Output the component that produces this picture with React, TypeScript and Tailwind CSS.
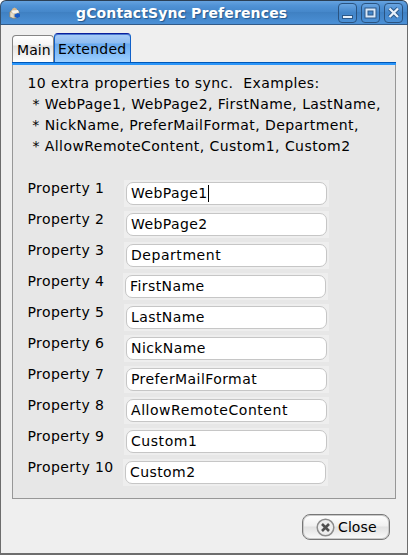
import React from 'react';

type Row = { label: string; value: string; shift?: boolean; focused?: boolean; wide?: boolean };

const rows: Row[] = [
  { label: 'Property 1', value: 'WebPage1', focused: true },
  { label: 'Property 2', value: 'WebPage2' },
  { label: 'Property 3', value: 'Department', wide: true },
  { label: 'Property 4', value: 'FirstName', shift: true },
  { label: 'Property 5', value: 'LastName' },
  { label: 'Property 6', value: 'NickName' },
  { label: 'Property 7', value: 'PreferMailFormat' },
  { label: 'Property 8', value: 'AllowRemoteContent', wide: true },
  { label: 'Property 9', value: 'Custom1', wide: true },
  { label: 'Property 10', value: 'Custom2', shift: true },
];

function AppIcon() {
  return (
    <svg width="12" height="12" viewBox="0 0 12 12" className="ml-[8px] shrink-0">
      <path d="M.8 5 3 3l7 1v6l-5 1.5L.8 10z" fill="#cdbfa5" stroke="#8c8068" strokeWidth=".7" />
      <path d="M3 2 5.5.6 8 2v1.5L3.5 4z" fill="#d9b98c" />
      <path d="M2.2 3.5 9 3l1 2.5-6 1z" fill="#f4f2ee" />
      <path d="M1.5 5.5 4.5 7v4L1.5 9.8z" fill="#e6dcc8" />
      <path d="M5.5 7.5 9 6l2 1.2v2.3L8.5 11l-2.8-1z" fill="#1459c8" />
    </svg>
  );
}

function TitleButton({ children }: { children: React.ReactNode }) {
  return (
    <div className="h-5 w-[19px] rounded-[4px] border border-[#2a5380] bg-linear-to-b from-[#69a5e2] via-[#4285c9] to-[#4b90d6]">
      <svg width="17" height="18" viewBox="0 0 17 18" fill="none">{children}</svg>
    </div>
  );
}

function TitleBar() {
  return (
    <div className="flex h-[25px] items-center rounded-t-[6px] border border-b-[#315a87] border-x-[#32506f] border-t-[#2b3f55] bg-[linear-gradient(#65a2df_0px,#4f91d5_5px,#4587ca_11px,#3f80c2_11px,#4b90d6_23px)]">
      <AppIcon />
      <div className="flex-1 pl-[55px] text-[14px] font-bold leading-[24px] text-white [text-shadow:1px_1px_1px_#24568c]">
        <span className="tracking-[0.13px]">gContactSync Preferences</span>
      </div>
      <div className="mr-[4px] flex gap-1">
        <TitleButton>
          <rect x="3.5" y="11.5" width="10" height="3" fill="#e8f1fb" stroke="#2c598a" />
        </TitleButton>
        <TitleButton>
          <rect x="4.5" y="5.5" width="8" height="7" stroke="#2c598a" strokeWidth="4" />
          <rect x="4.5" y="5.5" width="8" height="7" stroke="#dbe9f8" strokeWidth="2" />
        </TitleButton>
        <TitleButton>
          <path d="m4.5 4.5 8.5 8.5m0-8.5-8.5 8.5" stroke="#2c598a" strokeWidth="4.2" />
          <path d="m4.5 4.5 8.5 8.5m0-8.5-8.5 8.5" stroke="#e8f1fb" strokeWidth="2.3" />
        </TitleButton>
      </div>
    </div>
  );
}

function Tabs() {
  return (
    <div className="flex h-[29px] items-end pl-[11px]">
      <div className="h-[27px] w-[42px] rounded-t-[4px] border border-b-0 border-[#858585] bg-[linear-gradient(#fff_0px,#f5f5f5_9px,#e2e2e2_10px,#fff_26px)] pl-[4px] leading-[28px]">
        <span className="tracking-[0.1px]">Main</span>
      </div>
      <div className="h-[29px] w-[77px] rounded-t-[4px] border border-b-0 border-x-[#1060c8] border-t-[#0a1e9c] bg-[linear-gradient(#a9cdf8_0px,#8fbdf2_9px,#69aaf0_10px,#9ccfff_28px)] pl-[3px] leading-[30px] shadow-[inset_0_1px_0_#4a78d0]">
        <span className="tracking-[0.25px]">Extended</span>
      </div>
    </div>
  );
}

function PropertyRow({ label, value, shift, focused, wide }: Row) {
  return (
    <div className="flex h-[31px] items-start">
      <div className={shift ? 'w-[95.5px] shrink-0 leading-[16px]' : 'w-[96.5px] shrink-0 leading-[16px]'}>
        <span className="tracking-[0.42px]">{label}</span>
      </div>
      <div className="h-[27px] w-[205px] bg-[#eeeeee] p-[2px]">
        <div className="flex h-[23px] w-[201px] items-center rounded-[7px] border border-[#c6c6c6] bg-white pl-[4px]">
          <span className={wide ? 'tracking-[0.55px]' : 'tracking-[0.42px]'}>{value}</span>
          {focused && <span className="h-[17px] w-px bg-black" />}
        </div>
      </div>
    </div>
  );
}

export default function App() {
  return (
    <div className="h-[555px] w-[408px] bg-white font-['DejaVu_Sans',sans-serif] text-[14px] text-black">
      <div className="flex h-[555px] flex-col whitespace-pre rounded-t-[7px] bg-[#efefef]">
        <TitleBar />
        <div className="flex flex-1 flex-col border-x border-b-2 border-[#6d6d6d] pt-[8px]">
          <Tabs />
          <div className="ml-[11px] h-[437px] w-[384px] border border-t-0 border-[#979797] bg-[#e7e7e7]">
            <div className="-mx-px h-[3px] border-t border-[#0058b8] bg-[#2b95f8]" />
            <div className="pl-[14.5px] pt-[8px] leading-[21px]">
              <div><span className="tracking-[0.42px]">10 extra properties to sync.  Examples:</span></div>
              <div><span className="tracking-[0.43px]"> * WebPage1, WebPage2, FirstName, LastName,</span></div>
              <div><span className="tracking-[0.42px]"> * NickName, PreferMailFormat, Department,</span></div>
              <div><span className="tracking-[0.44px]"> * AllowRemoteContent, Custom1, Custom2</span></div>
            </div>
            <div className="pl-[14.5px] pt-[23px]">
              {rows.map((row) => <PropertyRow key={row.label} {...row} />)}
            </div>
          </div>
          <div className="mr-[17px] mt-[15px] flex h-[26px] w-[88px] items-center gap-[3px] self-end rounded-[8px] border border-[#777] bg-[linear-gradient(#fff_0px,#f0f0f0_11px,#e1e1e1_12px,#fafafa_24px)] pl-[13px] shadow-[inset_0_0_0_1px_#c9c9c9]">
            <svg width="19" height="19" viewBox="0 0 19 19" fill="none">
              <circle cx="9.5" cy="9.5" r="8.3" fill="#eee" stroke="#8d8d8d" strokeWidth="1.5" />
              <path d="m6 6 7 7m0-7-7 7" stroke="#505050" strokeWidth="2.6" />
            </svg>
            <span className="tracking-[0.1px]">Close</span>
          </div>
        </div>
      </div>
    </div>
  );
}
